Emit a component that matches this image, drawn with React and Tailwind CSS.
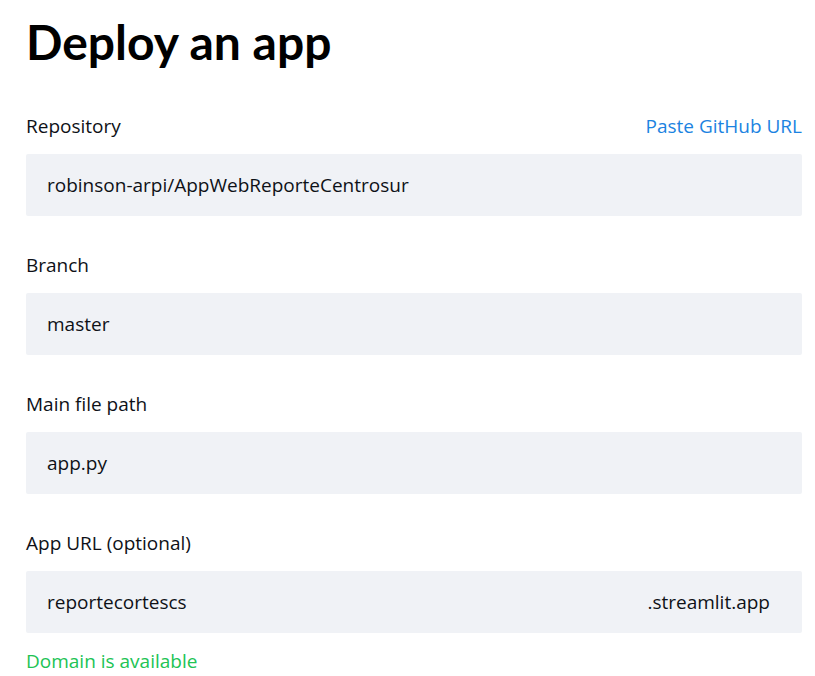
import React from "react";

function Field({ label, right, value, suffix }) {
  return (
    <div className="flex flex-col">
      <div className="flex items-center justify-between h-[24px] leading-[24px]">
        <span className="text-[19px] text-[#0e1117]">{label}</span>
        {right && <span className="text-[19px] text-[#1c83e1]">{right}</span>}
      </div>
      <div className="mt-[16px] h-[62px] bg-[#f0f2f6] rounded-[2px] flex items-center justify-between pl-[21px] pr-[32px]">
        <span className="text-[19px] leading-[24px] text-[#0e1117]">{value}</span>
        {suffix && <span className="text-[19px] leading-[24px] text-[#0e1117]">{suffix}</span>}
      </div>
    </div>
  );
}

export default function App() {
  return (
    <div
      className="w-[815px] h-[676px] bg-white pl-[26px] pr-[13px] overflow-hidden"
      style={{ fontFamily: "'Open Sans', 'Noto Sans', sans-serif" }}
    >
      <h1
        className="pt-[14px] text-[48px] leading-[56px] font-bold text-black"
        style={{ fontFamily: "Lato, sans-serif" }}
      >
        Deploy an app
      </h1>
      <div className="mt-[44px] flex flex-col gap-[37px]">
        <Field label="Repository" right="Paste GitHub URL" value="robinson-arpi/AppWebReporteCentrosur" />
        <Field label="Branch" value="master" />
        <Field label="Main file path" value="app.py" />
        <div className="flex flex-col">
          <Field label="App URL (optional)" value="reportecortescs" suffix=".streamlit.app" />
          <div className="mt-[16px] text-[19px] leading-[24px] text-[#21c354]">Domain is available</div>
        </div>
      </div>
    </div>
  );
}
